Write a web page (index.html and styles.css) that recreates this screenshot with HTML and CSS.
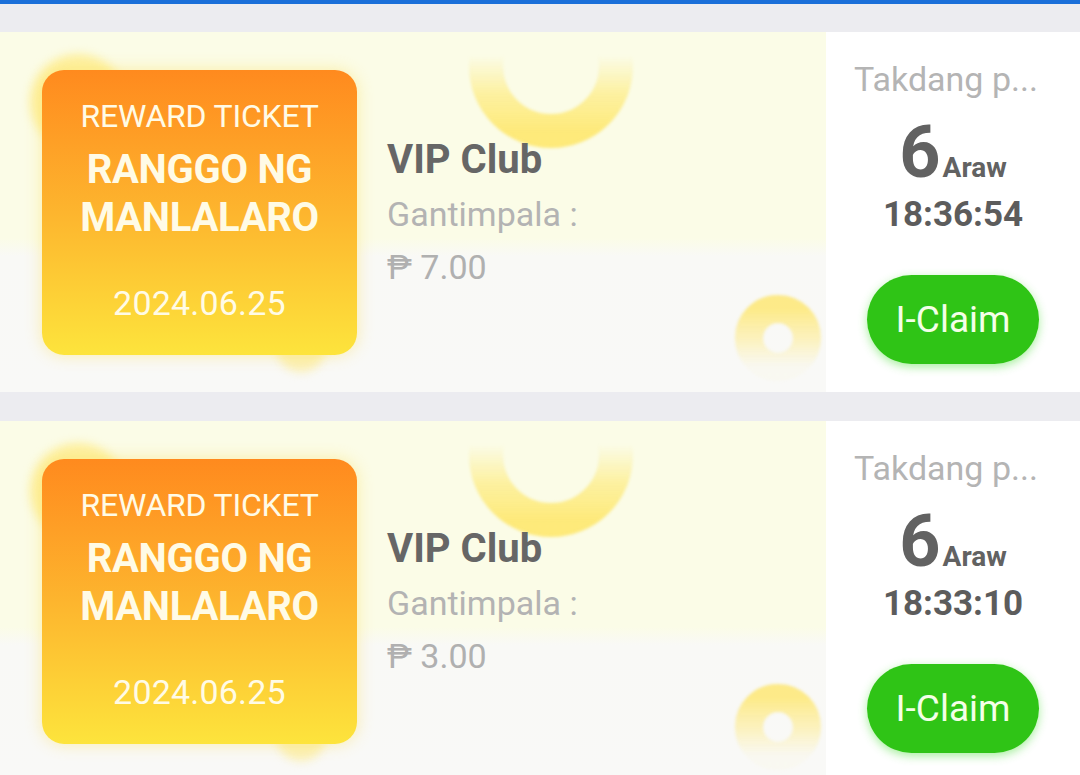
FILE: index.html
```html
<!DOCTYPE html>
<html lang="tl">
<head>
<meta charset="utf-8">
<title>Reward Tickets</title>
<link rel="stylesheet" href="styles.css">
</head>
<body>
<div class="topbar"></div>
<div class="list">
  <div class="card">
    <div class="card-main">
      <div class="glow glow-a"></div>
      <div class="glow glow-b"></div>
      <svg class="ring-top" width="164" height="164" viewBox="0 0 164 164">
        <defs>
          <linearGradient id="rt1" x1="0" y1="0" x2="0" y2="1">
            <stop offset="0.42" stop-color="#fdeb80" stop-opacity="0"/>
            <stop offset="0.72" stop-color="#fdeb80" stop-opacity="0.7"/>
            <stop offset="1" stop-color="#fde874" stop-opacity="0.95"/>
          </linearGradient>
        </defs>
        <circle cx="82" cy="82" r="65" fill="none" stroke="url(#rt1)" stroke-width="34"/>
      </svg>
      <svg class="donut" width="90" height="90" viewBox="0 0 90 90">
        <defs>
          <linearGradient id="dn1" x1="0" y1="0" x2="0" y2="1">
            <stop offset="0" stop-color="#fde87c" stop-opacity="0.9"/>
            <stop offset="0.55" stop-color="#fdec93" stop-opacity="0.55"/>
            <stop offset="1" stop-color="#fdf0a8" stop-opacity="0.08"/>
          </linearGradient>
        </defs>
        <circle cx="45" cy="45" r="29" fill="none" stroke="url(#dn1)" stroke-width="28"/>
      </svg>
      <div class="ticket">
        <div class="t-label">REWARD TICKET</div>
        <div class="t-title">RANGGO NG<br>MANLALARO</div>
        <div class="t-date">2024.06.25</div>
      </div>
      <div class="info">
        <div class="info-name">VIP Club</div>
        <div class="info-label">Gantimpala :</div>
        <div class="info-amount">₱ 7.00</div>
      </div>
    </div>
    <div class="card-side">
      <div class="side-label">Takdang p...</div>
      <div class="side-days"><span class="days-num">6</span><span class="days-unit">Araw</span></div>
      <div class="side-time">18:36:54</div>
      <button class="claim">I-Claim</button>
    </div>
  </div>

  <div class="card">
    <div class="card-main">
      <div class="glow glow-a"></div>
      <div class="glow glow-b"></div>
      <svg class="ring-top" width="164" height="164" viewBox="0 0 164 164">
        <defs>
          <linearGradient id="rt2" x1="0" y1="0" x2="0" y2="1">
            <stop offset="0.42" stop-color="#fdeb80" stop-opacity="0"/>
            <stop offset="0.72" stop-color="#fdeb80" stop-opacity="0.7"/>
            <stop offset="1" stop-color="#fde874" stop-opacity="0.95"/>
          </linearGradient>
        </defs>
        <circle cx="82" cy="82" r="65" fill="none" stroke="url(#rt2)" stroke-width="34"/>
      </svg>
      <svg class="donut" width="90" height="90" viewBox="0 0 90 90">
        <defs>
          <linearGradient id="dn2" x1="0" y1="0" x2="0" y2="1">
            <stop offset="0" stop-color="#fde87c" stop-opacity="0.9"/>
            <stop offset="0.55" stop-color="#fdec93" stop-opacity="0.55"/>
            <stop offset="1" stop-color="#fdf0a8" stop-opacity="0.08"/>
          </linearGradient>
        </defs>
        <circle cx="45" cy="45" r="29" fill="none" stroke="url(#dn2)" stroke-width="28"/>
      </svg>
      <div class="ticket">
        <div class="t-label">REWARD TICKET</div>
        <div class="t-title">RANGGO NG<br>MANLALARO</div>
        <div class="t-date">2024.06.25</div>
      </div>
      <div class="info">
        <div class="info-name">VIP Club</div>
        <div class="info-label">Gantimpala :</div>
        <div class="info-amount">₱ 3.00</div>
      </div>
    </div>
    <div class="card-side">
      <div class="side-label">Takdang p...</div>
      <div class="side-days"><span class="days-num">6</span><span class="days-unit">Araw</span></div>
      <div class="side-time">18:33:10</div>
      <button class="claim">I-Claim</button>
    </div>
  </div>
</div>
</body>
</html>
```

FILE: styles.css
```css
* { box-sizing: border-box; }

html, body {
  margin: 0;
  padding: 0;
}

body {
  background: #ececf0;
  font-family: Roboto, "Noto Sans", "DejaVu Sans", sans-serif;
  width: 1080px;
  height: 775px;
  overflow: hidden;
}

.topbar {
  height: 4px;
  background: #1a6fd9;
}

.list {
  padding-top: 28px;
  display: flex;
  flex-direction: column;
  gap: 29px;
}

.card {
  display: flex;
  height: 360px;
  flex: 0 0 360px;
}

.card-main {
  position: relative;
  overflow: hidden;
  flex: 0 0 826px;
  display: flex;
  align-items: flex-start;
  padding: 38px 0 0 42px;
  background: linear-gradient(to bottom, #fbfce7 0, #fbfce7 206px, #f9f9f6 224px, #f9f9f7 100%);
}

.glow {
  position: absolute;
  border-radius: 50%;
  filter: blur(5px);
}

.glow-a {
  left: 30px;
  top: 22px;
  width: 96px;
  height: 96px;
  background: #fdf0a0;
}

.glow-b {
  left: 276px;
  top: 290px;
  width: 50px;
  height: 50px;
  background: #fbf0b4;
}

.ring-top {
  position: absolute;
  left: 469px;
  top: -48px;
  filter: blur(1.5px);
}

.donut {
  position: absolute;
  left: 733px;
  top: 261px;
  filter: blur(1.5px);
}

.ticket {
  position: relative;
  width: 315px;
  height: 285px;
  border-radius: 22px;
  background: linear-gradient(to bottom, #ff8a1e 0%, #fdb52e 50%, #fde43c 100%);
  box-shadow: 0 0 16px rgba(253, 222, 80, 0.45);
  display: flex;
  flex-direction: column;
  align-items: center;
  padding-top: 26px;
  color: #fffbe6;
  text-align: center;
}

.t-label {
  font-size: 32px;
  line-height: 40px;
  letter-spacing: -0.2px;
}

.t-title {
  margin-top: 10px;
  font-size: 40px;
  line-height: 48px;
  font-weight: 700;
  letter-spacing: -0.3px;
}

.t-date {
  margin-top: 41px;
  font-size: 34px;
  line-height: 40px;
  letter-spacing: 0.2px;
}

.info {
  position: relative;
  margin-left: 30px;
  padding-top: 66px;
  display: flex;
  flex-direction: column;
}

.info-name {
  font-size: 40px;
  line-height: 48px;
  font-weight: 700;
  color: #666666;
}

.info-label {
  margin-top: 10px;
  font-size: 34px;
  line-height: 40px;
  color: #b3b3b3;
}

.info-amount {
  margin-top: 13px;
  font-size: 34px;
  line-height: 40px;
  color: #b0b0b0;
}

.card-side {
  flex: 1;
  background: #ffffff;
  display: flex;
  flex-direction: column;
  align-items: center;
  padding-top: 27px;
}

.side-label {
  font-size: 34px;
  line-height: 40px;
  color: #b4b4b4;
  white-space: nowrap;
  margin-left: -14px;
}

.side-days {
  margin-top: 14px;
  height: 80px;
  line-height: 80px;
  color: #626262;
  font-weight: 700;
  white-space: nowrap;
}

.days-num {
  font-size: 72px;
}

.days-unit {
  font-size: 28px;
  margin-left: 2px;
}

.side-time {
  margin-top: 2px;
  font-size: 35px;
  line-height: 40px;
  font-weight: 700;
  color: #5c5c5c;
}

.claim {
  margin-top: 40px;
  width: 172px;
  height: 89px;
  border: none;
  border-radius: 45px;
  background: #2fc416;
  color: #f4ffe8;
  font-family: Roboto, "Noto Sans", sans-serif;
  font-size: 37px;
  box-shadow: 0 3px 10px rgba(60, 220, 40, 0.45);
  padding: 0;
}
```
